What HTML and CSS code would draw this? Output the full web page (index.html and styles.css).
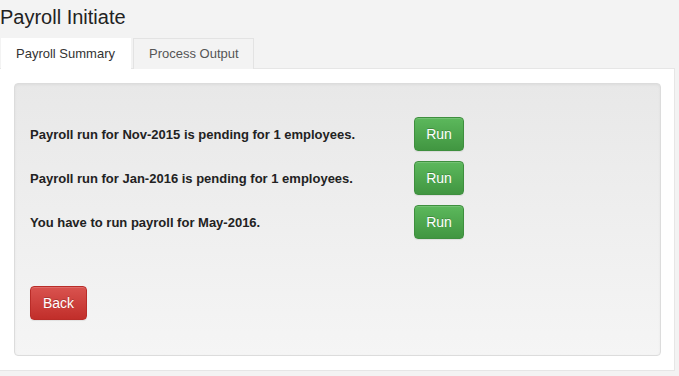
FILE: index.html
```html
<!DOCTYPE html>
<html>
<head>
<meta charset="utf-8">
<link rel="stylesheet" href="styles.css">
</head>
<body>
<div class="page">
  <h3 class="title">Payroll Initiate</h3>
  <ul class="tabs">
    <li class="tab active">Payroll Summary</li>
    <li class="tab">Process Output</li>
  </ul>
  <div class="panel">
    <div class="well">
      <div class="rows">
        <div class="row"><span class="msg">Payroll run for Nov-2015 is pending for 1 employees.</span><button class="btn btn-success">Run</button></div>
        <div class="row"><span class="msg">Payroll run for Jan-2016 is pending for 1 employees.</span><button class="btn btn-success">Run</button></div>
        <div class="row"><span class="msg">You have to run payroll for May-2016.</span><button class="btn btn-success">Run</button></div>
      </div>
      <button class="btn btn-danger">Back</button>
    </div>
  </div>
</div>
</body>
</html>
```
FILE: styles.css
```css
html, body {
  margin: 0;
  padding: 0;
  background: #f3f3f3;
  font-family: "Liberation Sans", Arial, sans-serif;
  color: #333;
}
.page {
  width: 676px;
  padding-left: 0;
}
.title {
  margin: 0;
  padding: 5px 0 0 0;
  font-size: 20px;
  font-weight: normal;
  line-height: 24px;
  color: #222;
  height: 33px;
}
.tabs {
  list-style: none;
  margin: 0;
  padding: 0 0 0 1px;
  display: flex;
  height: 31px;
}
.tab {
  font-size: 13px;
  line-height: 18px;
  padding: 6px 14px 6px 15px;
  border: 1px solid #e3e3e3;
  border-bottom: none;
  margin-right: 2px;
  color: #555;
  background: #f3f3f3;
}
.tab.active {
  padding: 6px 15px 6px 14px;
  background: #fff;
  color: #333;
  border-color: #fff;
  position: relative;
  z-index: 1;
}
.panel {
  background: #fff;
  border: 1px solid #e6e6e6;
  border-left: none;
  margin-top: -1px;
  padding: 14px 13px 14px 14px;
  width: 647px;
}
.well {
  height: 273px;
  border: 1px solid #dcdcdc;
  border-radius: 4px;
  background: linear-gradient(to bottom, #e8e8e8 0, #f5f5f5 100%);
  box-shadow: inset 0 1px 3px rgba(0,0,0,.05);
  padding: 33px 16px 0 15px;
  box-sizing: border-box;
}
.rows {
  display: flex;
  flex-direction: column;
  gap: 10px;
  margin-bottom: 47px;
}
.row {
  display: flex;
  align-items: center;
}
.msg {
  width: 384px;
  font-size: 13px;
  font-weight: bold;
  color: #222;
}
.btn {
  font-family: "Liberation Sans", Arial, sans-serif;
  font-size: 14px;
  line-height: 20px;
  height: 34px;
  padding: 6px 12px;
  border-radius: 4px;
  color: #fff;
  cursor: pointer;
  text-shadow: 0 -1px 0 rgba(0,0,0,.2);
  box-shadow: inset 0 1px 0 rgba(255,255,255,.15), 0 1px 1px rgba(0,0,0,.075);
}
.btn-success {
  width: 50px;
  padding: 6px 0;
  background: linear-gradient(to bottom, #5cb85c 0, #419641 100%);
  border: 1px solid #3e8f3e;
}
.btn-danger {
  width: 57px;
  padding: 6px 0;
  background: linear-gradient(to bottom, #d9534f 0, #c12e2a 100%);
  border: 1px solid #b92c28;
}
```
